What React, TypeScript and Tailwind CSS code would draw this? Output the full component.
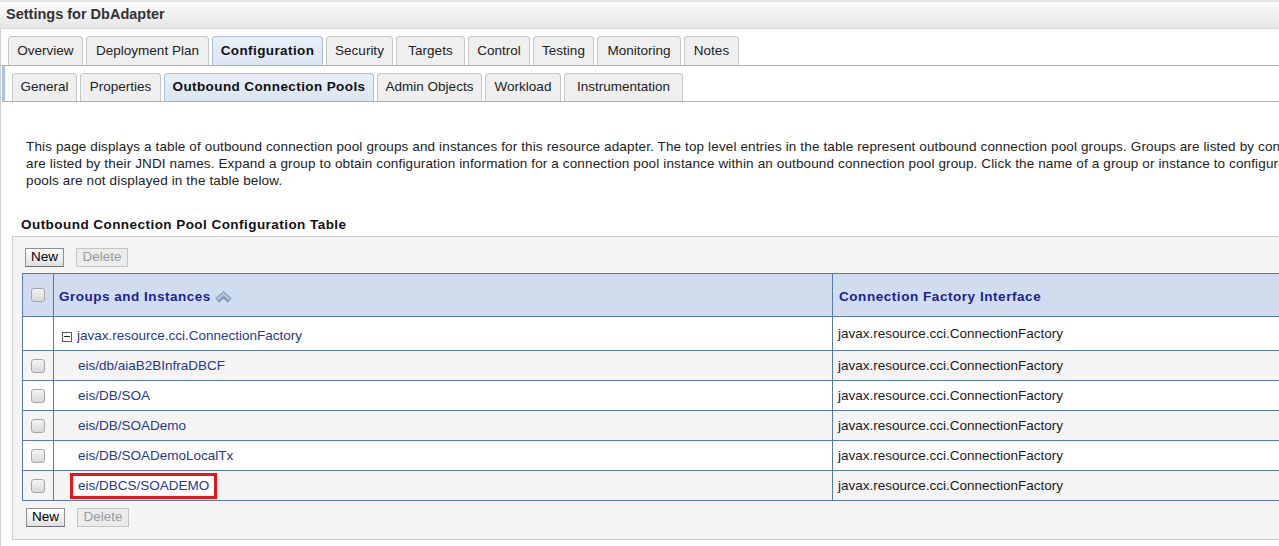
import React from "react";

const primaryTabs: { label: string; w: number; active?: boolean }[] = [
  { label: "Overview", w: 75 },
  { label: "Deployment Plan", w: 123 },
  { label: "Configuration", w: 111, active: true },
  { label: "Security", w: 67 },
  { label: "Targets", w: 69 },
  { label: "Control", w: 62 },
  { label: "Testing", w: 61 },
  { label: "Monitoring", w: 84 },
  { label: "Notes", w: 55 },
];

const secondaryTabs: { label: string; w: number; active?: boolean }[] = [
  { label: "General", w: 65 },
  { label: "Properties", w: 81 },
  { label: "Outbound Connection Pools", w: 210, active: true },
  { label: "Admin Objects", w: 105 },
  { label: "Workload", w: 76 },
  { label: "Instrumentation", w: 119 },
];

const rows = [
  "eis/db/aiaB2BInfraDBCF",
  "eis/DB/SOA",
  "eis/DB/SOADemo",
  "eis/DB/SOADemoLocalTx",
  "eis/DBCS/SOADEMO",
];

function Tab({ label, w, active, h }: { label: string; w: number; active?: boolean; h: string }) {
  return (
    <div
      style={{ width: w }}
      className={
        "flex items-center justify-center rounded-t-[4px] border border-b-0 text-[13.5px] " +
        h +
        " " +
        (active
          ? "border-[#a9c0d8] bg-gradient-to-b from-[#e9f0f8] to-[#d9e5f1] font-bold tracking-[0.4px] text-[#111]"
          : "border-[#c6c6c6] bg-[#efefef] text-[#222]")
      }
    >
      {label}
    </div>
  );
}

function Checkbox() {
  return (
    <div className="h-[14px] w-[14px] rounded-[3px] border border-[#a6a6a6] bg-gradient-to-b from-[#f4f4f4] to-[#d8d8d8]" />
  );
}

function Buttons() {
  return (
    <div className="flex gap-[12px]">
      <div className="flex h-[19px] w-[39px] items-center justify-center border border-[#8f8f8f] border-b-[#6f6f6f] bg-gradient-to-b from-[#ffffff] to-[#e0e0e0] text-[13.5px] text-black">
        New
      </div>
      <div className="flex h-[19px] w-[52px] items-center justify-center border border-[#c4c4c4] bg-[#ececec] text-[13.5px] text-[#9a9a9a]">
        Delete
      </div>
    </div>
  );
}

function SortIcon() {
  return (
    <svg width="17" height="12" viewBox="0 0 17 12" className="ml-[4px]">
      <path
        d="M0.8 7.5 L8.5 0.8 L16.2 7.5 L13.8 9.8 L8.5 5.2 L3.2 9.8 Z"
        fill="#b4c4da"
        stroke="#6f86a6"
        strokeWidth="1"
        strokeLinejoin="round"
      />
      <path d="M3.5 11.2 L8.5 6.8 L13.5 11.2" fill="none" stroke="#6f86a6" strokeWidth="1.1" />
    </svg>
  );
}

function MinusBox() {
  return (
    <div className="relative mr-[5px] h-[10px] w-[10px] border border-[#5a5a5a] bg-white">
      <div className="absolute left-[1px] right-[1px] top-[3.5px] h-[1px] bg-[#222]" />
    </div>
  );
}

export default function App() {
  return (
    <div className="h-[546px] w-[1279px] overflow-hidden bg-white font-['Liberation_Sans',Arial,sans-serif]">
      {/* Header */}
      <div className="flex h-[29px] items-center border-t-2 border-b border-t-[#e4e4e4] border-b-[#d8d8d8] bg-gradient-to-b from-[#fbfbfb] to-[#e6e6e6] pl-[6px]">
        <span className="text-[14.5px] font-bold text-[#333]">Settings for DbAdapter</span>
      </div>

      <div className="h-[517px] border-l border-[#cfcfcf]">
        {/* Primary tabs */}
        <div className="flex gap-[3px] border-b border-[#9fb6cd] pl-[7px] pt-[7px]">
          {primaryTabs.map((t) => (
            <Tab key={t.label} {...t} h="h-[29px]" />
          ))}
        </div>

        {/* Secondary tabs */}
        <div className="ml-[1px] flex gap-[3px] border-b border-l-[3px] border-b-[#9fb6cd] border-l-[#a9c4e0] pl-[7px] pt-[7px]">
          {secondaryTabs.map((t) => (
            <Tab key={t.label} {...t} h="h-[28px]" />
          ))}
        </div>

        {/* Description */}
        <div className="mt-[36px] pl-[25px] text-[13.5px] leading-[17px] tracking-[0.13px] text-[#222]">
          <div className="whitespace-nowrap">
            This page displays a table of outbound connection pool groups and instances for this resource adapter. The top level entries in the table represent outbound connection pool groups. Groups are listed by connection factory interface name. Instances
          </div>
          <div className="whitespace-nowrap">
            are listed by their JNDI names. Expand a group to obtain configuration information for a connection pool instance within an outbound connection pool group. Click the name of a group or instance to configure it. Note: Non-configured connection
          </div>
          <div className="whitespace-nowrap">pools are not displayed in the table below.</div>
        </div>

        {/* Heading */}
        <div className="mt-[27px] pl-[20px] text-[13.5px] font-bold leading-[17px] tracking-[0.45px] text-[#111]">
          Outbound Connection Pool Configuration Table
        </div>

        {/* Panel */}
        <div className="ml-[11px] mt-[3px] h-[304px] w-[1300px] border border-[#cfcfcf] bg-[#f4f4f4] pl-[12px] pt-[11px]">
          <Buttons />
          <table className="ml-[-3px] mt-[6px] w-[1290px] border-collapse text-[13.5px]">
            <colgroup>
              <col style={{ width: 31 }} />
              <col style={{ width: 779 }} />
              <col />
            </colgroup>
            <thead>
              <tr className="h-[43px] bg-[#d0ddee]">
                <th className="border border-[#5b7aa2] p-0">
                  <div className="flex justify-center">
                    <Checkbox />
                  </div>
                </th>
                <th className="border border-[#5b7aa2] px-[5px] pt-[4px] text-left font-bold tracking-[0.5px] text-[#1a1f96]">
                  <div className="flex items-center">
                    Groups and Instances
                    <SortIcon />
                  </div>
                </th>
                <th className="border border-[#5b7aa2] px-[6px] pt-[4px] text-left font-bold tracking-[0.55px] text-[#1a1f96]">
                  Connection Factory Interface
                </th>
              </tr>
            </thead>
            <tbody>
              <tr className="h-[34px] bg-white">
                <td className="border border-[#5b7aa2]" />
                <td className="border border-[#5b7aa2] px-[8px] pt-[6px]">
                  <div className="flex items-center text-[#243a8c]">
                    <MinusBox />
                    javax.resource.cci.ConnectionFactory
                  </div>
                </td>
                <td className="border border-[#5b7aa2] px-[5px] pt-[2px] text-[#1a1a1a]">
                  javax.resource.cci.ConnectionFactory
                </td>
              </tr>
              {rows.map((r, i) => (
                <tr key={r} className={"h-[30px] " + (i % 2 === 0 ? "bg-[#f4f4f4]" : "bg-white")}>
                  <td className="border border-[#5b7aa2] p-0">
                    <div className="flex justify-center">
                      <Checkbox />
                    </div>
                  </td>
                  <td className="border border-[#5b7aa2] p-0 pl-[24px]">
                    {r === "eis/DBCS/SOADEMO" ? (
                      <span className="-ml-[8px] inline-flex h-[26px] items-center border-[3px] border-[#e8141c] bg-white px-[5px] pt-[1px] text-[#243a8c]">
                        {r}
                      </span>
                    ) : (
                      <span className="inline-block pt-[2px] text-[#243a8c]">{r}</span>
                    )}
                  </td>
                  <td className="border border-[#5b7aa2] px-[5px] pt-[2px] text-[#1a1a1a]">
                    javax.resource.cci.ConnectionFactory
                  </td>
                </tr>
              ))}
            </tbody>
          </table>
          <div className="mt-[7px] pl-[1px]">
            <Buttons />
          </div>
        </div>
      </div>
    </div>
  );
}
